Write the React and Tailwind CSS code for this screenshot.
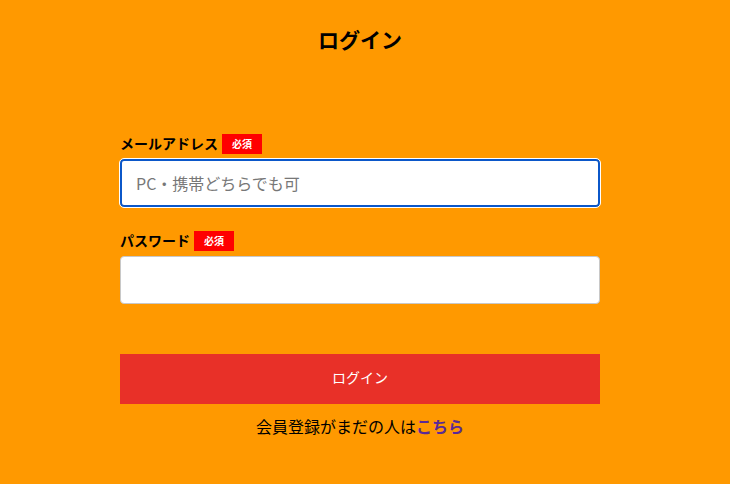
import React from 'react';

const Badge = () => (
  <span className="ml-[4px] inline-flex h-5 w-10 items-center justify-center bg-[#ff0000] text-[10px] font-bold leading-none text-white">
    必須
  </span>
);

const App = () => {
  return (
    <div
      className="min-h-[484px] w-full bg-[#ff9900] text-black"
      style={{ fontFamily: '"Noto Sans CJK JP", "Noto Sans", sans-serif' }}
    >
      <div className="w-[720px]">
        <div className="mx-auto w-[480px]">
          {/* Title */}
          <h1 className="pt-[24px] text-center text-[21px] font-bold leading-[30px]">ログイン</h1>

          <form className="mt-[80px]" onSubmit={(e) => e.preventDefault()}>
            <div className="flex h-5 items-center">
              <label className="-mt-[3px] text-[14px] font-bold leading-5">メールアドレス</label>
              <Badge />
            </div>
            <input
              type="text"
              placeholder="PC・携帯どちらでも可"
              className="mt-[5px] block h-[48px] w-full rounded-[4px] border-2 border-[#0b57c9] bg-white px-[14px] text-[16px] outline outline-1 outline-white placeholder:text-[#777]"
            />

            <div className="mt-[24px] flex h-5 items-center">
              <label className="-mt-[3px] text-[14px] font-bold leading-5">パスワード</label>
              <Badge />
            </div>
            <input
              type="password"
              className="mt-[5px] block h-[48px] w-full rounded-[4px] border border-[#c8c8c8] bg-white px-[14px] text-[16px] outline-none"
            />

            <button
              type="submit"
              className="mt-[50px] block h-[50px] w-full bg-[#e83028] pb-[3px] text-[14px] text-white"
            >
              ログイン
            </button>
          </form>

          <p className="mt-[10px] text-center text-[16px] leading-[24px]">
            会員登録がまだの人は
            <a href="#" className="font-bold text-[#5a2a96]">こちら</a>
          </p>
        </div>
      </div>
    </div>
  );
};

export default App;
